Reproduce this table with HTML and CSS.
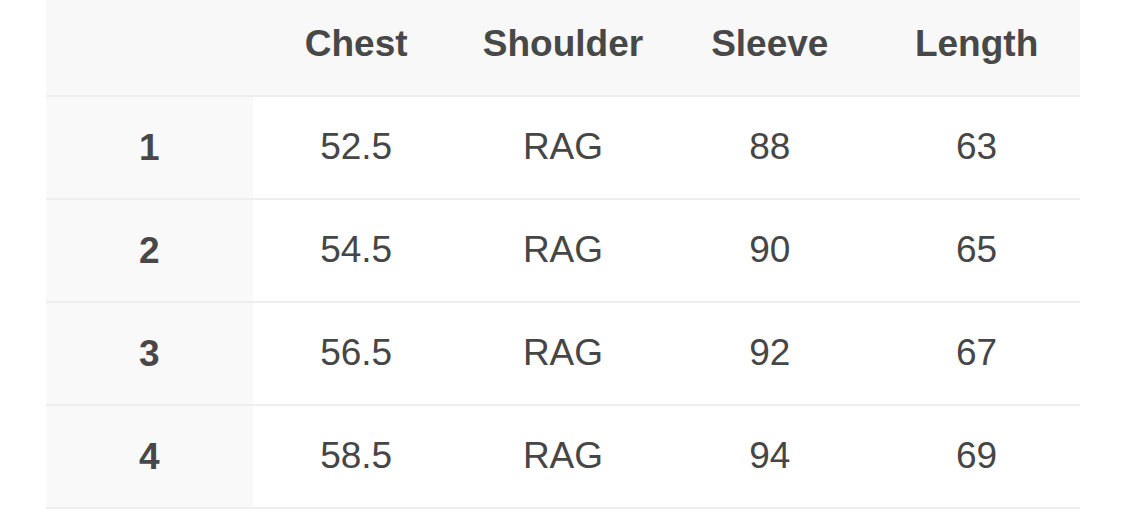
FILE: index.html
```html
<!DOCTYPE html>
<html>
<head>
<meta charset="utf-8">
<link rel="stylesheet" href="styles.css">
</head>
<body>
<div class="wrap">
<table class="size-table">
  <thead>
    <tr>
      <th class="corner"></th>
      <th>Chest</th>
      <th>Shoulder</th>
      <th>Sleeve</th>
      <th>Length</th>
    </tr>
  </thead>
  <tbody>
    <tr><th class="rowhead">1</th><td>52.5</td><td>RAG</td><td>88</td><td>63</td></tr>
    <tr><th class="rowhead">2</th><td>54.5</td><td>RAG</td><td>90</td><td>65</td></tr>
    <tr><th class="rowhead">3</th><td>56.5</td><td>RAG</td><td>92</td><td>67</td></tr>
    <tr><th class="rowhead">4</th><td>58.5</td><td>RAG</td><td>94</td><td>69</td></tr>
  </tbody>
</table>
</div>
</body>
</html>
```
FILE: styles.css
```css
html, body {
  margin: 0;
  padding: 0;
  background: #ffffff;
}
.wrap {
  padding-left: 46px;
}
.size-table {
  width: 1034px;
  border-collapse: collapse;
  table-layout: fixed;
  font-family: "Liberation Sans", Arial, sans-serif;
  font-size: 37px;
  color: #464646;
}
.size-table th,
.size-table td {
  text-align: center;
  padding: 0;
  border-bottom: 2px solid #eeeeee;
}
.size-table thead th {
  height: 87px;
  padding-bottom: 8px;
  background: #f8f8f8;
  font-weight: 700;
  color: #484848;
}
.size-table tbody td,
.size-table tbody th {
  height: 101px;
  font-weight: 400;
}
.size-table tbody td {
  padding-bottom: 2px;
  height: 99px;
}
.size-table tbody th.rowhead {
  background: #f9f9f9;
  font-weight: 700;
  color: #484848;
}
```
